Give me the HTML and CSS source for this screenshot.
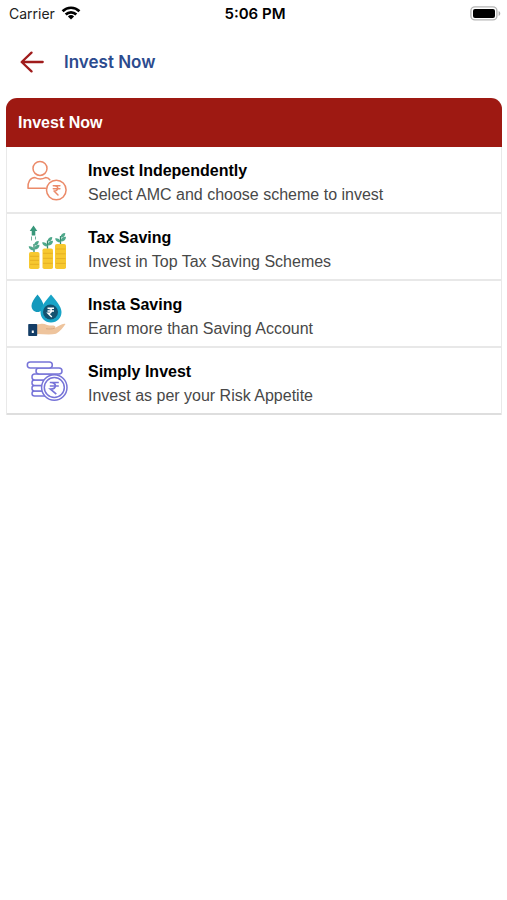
FILE: index.html
```html
<!DOCTYPE html>
<html lang="en">
<head>
<meta charset="utf-8">
<meta name="viewport" content="width=device-width, initial-scale=1">
<title>Invest Now</title>
<link rel="stylesheet" href="styles.css">
</head>
<body>
<div class="status">
  <div class="carrier">Carrier
    <svg width="20" height="14" viewBox="0 0 20 14" aria-hidden="true"><g fill="none" stroke="#000" stroke-width="2.7"><path d="M1.6 5.2a12 12 0 0 1 16.8 0"/><path d="M4.7 8.5a7.6 7.6 0 0 1 10.6 0"/></g><path d="M6.9 10.5a4.5 4.5 0 0 1 6.2 0L10 13.6z"/></svg>
  </div>
  <div class="clock">5:06 PM</div>
  <svg class="battery" width="31" height="15" viewBox="0 0 31 15" aria-hidden="true"><rect x=".9" y=".9" width="26" height="13" rx="4" fill="#fff" stroke="#b5b5b5" stroke-width="1.4"/><rect x="3" y="3" width="22" height="9" rx="2"/><path d="M28.6 5c2.2.7 2.2 4.300 0 5z" fill="#aaa"/></svg>
</div>
<header class="nav">
  <button class="back" type="button" aria-label="Back"><svg width="24" height="22" viewBox="0 0 24 22"><path d="M11.500 1.600 1.700 11l9.800 9.400M2 11h20.700" fill="none" stroke="#a01c1c" stroke-width="2.300" stroke-linecap="round" stroke-linejoin="round"/></svg></button>
  <h1>Invest Now</h1>
</header>
<main class="card">
  <h2>Invest Now</h2>
  <a class="row" href="#independent">
    <svg class="icon" viewBox="0 0 56 56" aria-hidden="true"><g fill="none" stroke="#eb8a69" stroke-width="1.500" stroke-linejoin="round" stroke-linecap="round"><circle cx="20" cy="15.400" r="7"/><path d="M25.500 35.300H8c-.4-6.500 2-10.500 7-10.700 3.500 1.800 7 1.800 10.500 0 2 .2 3.300.8 4.300 2.200"/><circle cx="36.300" cy="37" r="9.800"/><path d="M33.300 32.700h6.600M33.300 35.700h6.600M34 32.700c5-.2 5 5.500 0 5.300l4 4"/></g></svg>
    <span class="text"><strong>Invest Independently</strong><span>Select AMC and choose scheme to invest</span></span>
  </a>
  <a class="row" href="#tax">
    <svg class="icon" viewBox="0 0 56 56" aria-hidden="true">
      <g fill="#f7c82f"><rect x="9" y="32" width="10.500" height="17" rx="1.800"/><rect x="22.500" y="28.500" width="10.500" height="20.500" rx="1.800"/><rect x="35" y="24" width="11" height="25" rx="1.800"/></g>
      <path d="M10 36.300h9M10 40.300h9M10 44.300h9M23 33.300h9.500M23 38.300h9.500M23 43.300h9.500M36 29h9.500M36 33.800h9.500M36 38.600h9.500M36 43.400h9.500" stroke="#e5b022" stroke-width="1"/>
      <path d="M14 32v-8M27.500 28.500v-8M40.500 24v-8" stroke="#37886c" stroke-width="1.300"/>
      <g fill="#4fa88b"><path id="leaves" d="M14.200 30.500c-3.500 0-5.500-1.800-5.500-4.300 3.300 0 5.500 1.500 5.500 4.300zM14.200 29.500c0-3 1.700-4.700 5.300-4.700 0 3-1.700 4.700-5.300 4.700zM14.200 25.600c0-3 1.400-4.500 4.600-4.500 0 3-1.500 4.500-4.600 4.500z"/><use href="#leaves" x="13.500" y="-4"/><use href="#leaves" x="26.500" y="-8"/></g>
      <path d="m13.500 5.500 3.800 5.500h-2v4.500h-3.600V11h-2z" fill="#38977a"/><path d="M11.500 16.500v4M15.500 16.500v3" stroke="#70b29d"/>
    </svg>
    <span class="text"><strong>Tax Saving</strong><span>Invest in Top Tax Saving Schemes</span></span>
  </a>
  <a class="row" href="#insta">
    <svg class="icon" viewBox="0 0 56 56" aria-hidden="true">
      <path d="M17.500 7.500c-3.300 4.200-6 8-6 11.200 0 3.700 2.500 6.300 6 6.300s6-2.600 6-6.300c0-3.200-2.700-7-6-11.200z" fill="#1599bc"/>
      <path d="M31 7.500c-5 6-10.500 12-10.500 17.500 0 6 4.500 10.500 10.500 10.500s10.500-4.500 10.500-10.500c0-5.500-5.500-11.500-10.500-17.500z" fill="#18a4c7"/>
      <circle cx="30.500" cy="25" r="7.500" fill="#14526f"/>
      <path d="M27.500 21.300h6.500M27.500 24h6.500M28 21.300c4.700-.1 4.700 5.200 0 5l3.800 3.700" fill="none" stroke="#fff" stroke-width="1.400"/>
      <path d="M17 37.500c5-1 7-1 9.500.3 2 1 4 .7 7 .8 2 .2 2.500 1.800 1.200 2.500l5.300-2.800c2-1.300 4-2.200 5.500-1.300-2 3-5.500 7.500-9.500 9.800-5 1.200-12 .5-19 .2z" fill="#eec49d"/>
      <path d="M26 41.700c3 .4 6 .5 8.700-.5" fill="none" stroke="#d9a982"/>
      <rect x="8.200" y="37" width="9" height="12" rx=".8" fill="#143d66"/><rect x="11.800" y="43.500" width="2" height="2.500" fill="#fff"/>
    </svg>
    <span class="text"><strong>Insta Saving</strong><span>Earn more than Saving Account</span></span>
  </a>
  <a class="row" href="#simple">
    <svg class="icon" viewBox="0 0 56 56" aria-hidden="true"><g fill="#fff" stroke="#7774d8" stroke-width="1.500">
      <rect x="12" y="37" width="24" height="5" rx="2.500"/><rect x="12" y="31.500" width="24" height="5.500" rx="2.500"/><rect x="12" y="26" width="24" height="5.500" rx="2.500"/><rect x="12" y="20" width="24" height="6" rx="2.800"/><rect x="16" y="14" width="26" height="6" rx="3"/><rect x="7.300" y="8" width="25" height="6" rx="3"/>
      <circle cx="34.300" cy="33.500" r="12.700"/><circle cx="34.300" cy="33.500" r="10"/><path d="M29.800 28.500h9M29.800 32h9M30.500 28.500c6.500-.3 6.500 7 0 6.700l5.800 5" fill="none" stroke-width="1.700"/></g></svg>
    <span class="text"><strong>Simply Invest</strong><span>Invest as per your Risk Appetite</span></span>
  </a>
</main>
</body>
</html>
```
FILE: styles.css
```css
* { box-sizing: border-box; }
body { margin: 0; background: #fff; color: #000; font-family: "Liberation Sans", Arial, sans-serif; }
.status { display: grid; grid-template-columns: 1fr auto 1fr; align-items: center; height: 26px; padding: 0 6px 0 9px; font-family: Inter, sans-serif; font-size: 14px; }
.carrier { display: flex; align-items: center; gap: 6px; color: #222; }
.clock { font-size: 15px; font-weight: 600; }
.battery { justify-self: end; }
.nav { display: flex; align-items: center; gap: 20px; height: 72px; padding: 0 20px; }
.back { display: flex; padding: 0; border: 0; background: none; cursor: pointer; }
h1, h2 { margin: 0; font-size: 16px; line-height: 24px; }
h1 { font-family: Inter, sans-serif; font-size: 17px; font-weight: 600; color: #2c4b8e; }
.card { margin: 0 5px 0 6px; border: solid #e9e9e9; border-width: 0 1px; border-radius: 11px 11px 0 0; }
h2 { margin: 0 -1px; padding: 13px 12px 12px; color: #fff; background: #9e1912; border-radius: 11px 11px 0 0; }
.row { display: flex; align-items: flex-start; gap: 12px; height: 67px; padding: 6px 0 0 13px; border-bottom: 2px solid #e8e8e8; color: inherit; text-decoration: none; }
.row:last-child { border-color: #dedede; }
.icon { flex: none; width: 56px; height: 56px; }
.text { display: flex; flex-direction: column; padding-top: 6px; font-size: 16px; line-height: 24px; }
.text > span { color: #484848; }
```
